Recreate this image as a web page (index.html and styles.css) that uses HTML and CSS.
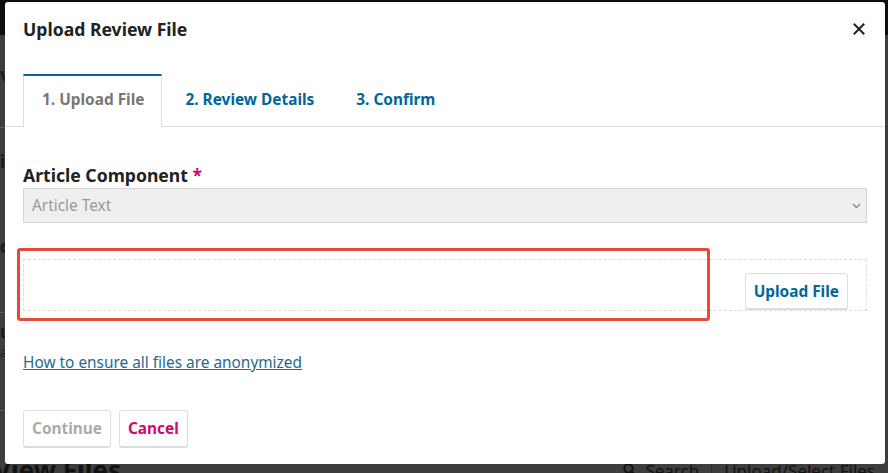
FILE: index.html
```html
<!DOCTYPE html>
<html>
  <head>
    <link rel="stylesheet" href="styles.css">
  </head>
  <body>
    <div class="page">
      <div class="page-header"></div>
      <div class="page-side">
        <div class="side-row row-v">view</div>
        <div class="side-line line-1"></div>
        <div class="side-row row-is">is</div>
        <div class="side-row row-d">d</div>
        <div class="side-line line-2"></div>
        <div class="side-row row-u">u</div>
        <div class="side-row row-a">a</div>
        <div class="side-line line-3"></div>
      </div>
      <div class="files-bar">
        <h1 class="files-title">View Files</h1>
        <div class="files-actions">
          <span class="files-search">
            <svg width="14" height="14" viewBox="0 0 14 14"><circle cx="5.5" cy="5.5" r="4.2" fill="none" stroke="#111" stroke-width="2"/><line x1="8.5" y1="8.5" x2="13" y2="13" stroke="#111" stroke-width="2"/></svg>
            Search
          </span>
          <span class="files-sep"></span>
          <span class="files-upload">Upload/Select Files</span>
        </div>
      </div>
    </div>

    <div class="modal">
      <div class="modal-header">
        <h2 class="modal-title">Upload Review File</h2>
        <button class="modal-close" aria-label="Close">
          <svg width="12" height="12" viewBox="0 0 12 12"><path d="M1.5 1.5 L10.5 10.5 M10.5 1.5 L1.5 10.5" stroke="#222" stroke-width="2" stroke-linecap="square"/></svg>
        </button>
      </div>

      <div class="tabs">
        <a class="tab active">1. Upload File</a>
        <a class="tab">2. Review Details</a>
        <a class="tab">3. Confirm</a>
      </div>

      <div class="modal-body">
        <label class="field-label">Article Component <span class="required">*</span></label>
        <div class="select">
          <span>Article Text</span>
          <svg width="9" height="6" viewBox="0 0 9 6"><path d="M1 1 L4.5 4.5 L8 1" fill="none" stroke="#888" stroke-width="1.4"/></svg>
        </div>

        <div class="dropzone-wrap">
          <div class="dropzone">
            <button class="btn upload-btn">Upload File</button>
          </div>
          <div class="highlight"></div>
        </div>

        <a class="help-link" href="#">How to ensure all files are anonymized</a>

        <div class="actions">
          <button class="btn btn-disabled">Continue</button>
          <button class="btn btn-cancel">Cancel</button>
        </div>
      </div>
    </div>
  </body>
</html>
```

FILE: styles.css
```css
body {
  margin: 0;
  padding: 0;
  font-family: "Noto Sans", Arial, sans-serif;
  background-color: #3d3d3d;
  overflow: hidden;
  height: 100vh;
}

.page {
  display: flex;
  flex-direction: column;
  height: 100vh;
}

.page-header {
  height: 35px;
  background-color: #0e0e0e;
  flex-shrink: 0;
}

/* page behind the modal */

.page-side {
  display: flex;
  flex-direction: column;
  width: 40px;
}

.side-row {
  color: #1a1a1a;
  font-size: 17px;
  font-weight: bold;
  line-height: 24px;
  height: 24px;
  white-space: nowrap;
}

.side-line {
  height: 1px;
  background-color: #5a5a5a;
}

.row-v { margin-top: 28px; }
.line-1 { margin-top: 40px; }
.row-is { margin-top: 22px; }
.row-d { margin-top: 61px; }
.line-2 { margin-top: 53px; }
.row-u { margin-top: 9px; line-height: 20px; height: 20px; }
.row-a {
  margin-top: 2px;
  font-size: 13px;
  font-weight: normal;
  line-height: 16px;
  height: 16px;
}
.line-3 { margin-top: 50px; }

.files-bar {
  margin-top: auto;
  margin-bottom: -12px;
  display: flex;
  align-items: center;
  justify-content: space-between;
  padding: 0 13px 0 0;
  color: #111;
}

.files-title {
  margin: 0 0 0 -6px;
  font-size: 26px;
  line-height: 30px;
}

.files-actions {
  display: flex;
  align-items: center;
  font-size: 17px;
}

.files-search {
  display: flex;
  align-items: center;
  gap: 8px;
}

.files-sep {
  width: 1px;
  height: 30px;
  background-color: #2a2a2a;
  margin: 0 12px;
}

/* modal */

.modal {
  position: absolute;
  top: 2px;
  left: 5px;
  width: 880px;
  height: 462px;
  background-color: #fff;
  border-radius: 3px;
  color: #222;
  box-sizing: border-box;
}

.modal-header {
  display: flex;
  justify-content: space-between;
  align-items: flex-start;
  padding: 16px 18px 34px;
}

.modal-title {
  margin: 0;
  font-size: 17.6px;
  line-height: 22px;
  font-weight: bold;
}

.modal-close {
  border: none;
  background: none;
  padding: 0;
  margin: 5px 2px 0 0;
  width: 12px;
  height: 12px;
  cursor: pointer;
}

.modal-close svg {
  display: block;
}

.tabs {
  display: flex;
  gap: 4px;
  padding: 0 18px;
  border-bottom: 1px solid #ddd;
}

.tab {
  border-top: 2px solid transparent;
  border-left: 1px solid transparent;
  border-right: 1px solid transparent;
  padding: 1px 18px 4px;
  margin-bottom: -1px;
  line-height: 46px;
  font-size: 15.4px;
  font-weight: bold;
  color: #006798;
  cursor: pointer;
}

.tab.active {
  border-top-color: #006798;
  border-left-color: #ddd;
  border-right-color: #ddd;
  background-color: #fff;
  color: #777;
  padding-right: 17px;
}

.modal-body {
  padding: 36px 18px 17px;
  display: flex;
  flex-direction: column;
}

.field-label {
  font-size: 17.6px;
  line-height: 24px;
  font-weight: bold;
  margin-bottom: 1px;
}

.required {
  color: #d00a6c;
}

.select {
  display: flex;
  justify-content: space-between;
  align-items: center;
  height: 35px;
  box-sizing: border-box;
  border: 1px solid #d5d5d5;
  background-color: #efefef;
  padding: 0 5px 0 8px;
  font-size: 15.4px;
  color: #999;
}

.dropzone-wrap {
  position: relative;
  margin-top: 36px;
}

.dropzone {
  display: flex;
  justify-content: flex-end;
  height: 52px;
  box-sizing: border-box;
  border: 1px dashed #ddd;
  padding: 13px 18px 0 0;
}

.highlight {
  position: absolute;
  left: -6px;
  top: -11px;
  width: 693px;
  height: 73px;
  box-sizing: border-box;
  border: 3px solid #e5483d;
  border-radius: 3px;
}

.btn {
  font-family: "Noto Sans", Arial, sans-serif;
  font-size: 15.4px;
  font-weight: bold;
  height: 37px;
  padding: 0 8px;
  background-color: #fff;
  border: 1px solid #ddd;
  border-radius: 3px;
  box-shadow: 0 1px 0 #ddd;
  cursor: pointer;
}

.upload-btn {
  height: 36px;
  color: #006798;
}

.help-link {
  margin-top: 42px;
  align-self: flex-start;
  font-size: 15.4px;
  line-height: 20px;
  color: #1e6a8a;
  text-decoration: underline;
}

.actions {
  display: flex;
  gap: 8px;
  margin-top: 37px;
}

.btn-disabled {
  color: #aaa;
  cursor: default;
}

.btn-cancel {
  color: #d00a6c;
}
```
